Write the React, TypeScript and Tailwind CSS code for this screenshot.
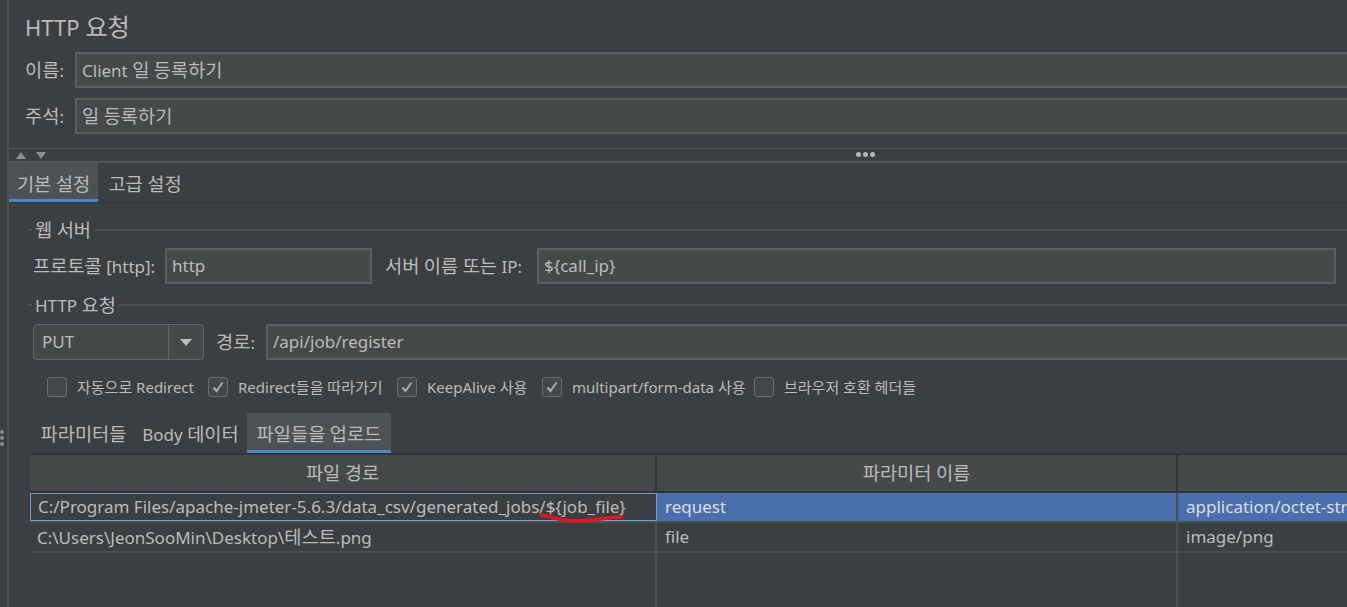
import React from 'react'

const FONT = { fontFamily: '"Noto Sans", "Noto Sans CJK KR", sans-serif' }

// 한글 구간만 조금 키워서 원본(맑은 고딕 계열) 폭에 맞춘다
function K({ t }: { t: string }) {
  const parts = t.split(/([\u3131-\u318E\uAC00-\uD7A3]+)/)
  return (
    <span className="whitespace-pre">
      {parts.map((p, i) =>
        i % 2 === 1 ? (
          <span key={i} className="text-[1.1em]">
            {p}
          </span>
        ) : (
          <React.Fragment key={i}>{p}</React.Fragment>
        ),
      )}
    </span>
  )
}

function Field({ value, className = '' }: { value: string; className?: string }) {
  return (
    <div
      className={
        'flex h-[36px] items-center border-2 border-[#5c5e5f] bg-[#45494a] px-[5px] text-[17px] leading-[24px] text-[#bbbbbb] ' +
        className
      }
    >
      <K t={value} />
    </div>
  )
}

function GroupTitle({ title }: { title: string }) {
  return (
    <div className="flex h-[24px] items-center pl-[19px]">
      <div className="h-[2px] w-[4px] bg-[#4f5254]" />
      <span className="px-[3px] text-[17px] leading-[24px] text-[#bbbbbb]">
        <K t={title} />
      </span>
      <div className="h-[2px] flex-1 bg-[#4f5254]" />
    </div>
  )
}

function Check({ checked, label, w }: { checked: boolean; label: string; w: string }) {
  return (
    <div className={'flex h-[20px] shrink-0 items-center gap-[10px] ' + w}>
      <div className="flex h-[20px] w-[20px] shrink-0 items-center justify-center rounded-[3px] border border-[#6b6e70] bg-[#43494a]">
        {checked && (
          <svg width="14" height="14" viewBox="0 0 14 14">
            <path d="M2.5 7.5 L5.5 11 L11.5 2.5" fill="none" stroke="#a9abad" strokeWidth="2" />
          </svg>
        )}
      </div>
      <span className="whitespace-nowrap text-[15px] leading-[20px] text-[#bbbbbb]">{label}</span>
    </div>
  )
}

function Tab({ label, active, w }: { label: string; active?: boolean; w: string }) {
  return (
    <div className={'flex h-full shrink-0 flex-col ' + w + (active ? ' bg-[#4e5254]' : '')}>
      <div className="flex flex-1 items-center justify-center pt-[6px] text-[17px] text-[#bbbbbb]">
        <K t={label} />
      </div>
      <div className={'h-[3px] ' + (active ? 'bg-[#4a88c7]' : '')} />
    </div>
  )
}

const rows = [
  {
    path: 'C:/Program Files/apache-jmeter-5.6.3/data_csv/generated_jobs/',
    mark: '${job_file}',
    param: 'request',
    mime: 'application/octet-stream',
    selected: true,
  },
  {
    path: 'C:\\Users\\JeonSooMin\\Desktop\\테스트.png',
    mark: '',
    param: 'file',
    mime: 'image/png',
    selected: false,
  },
]

export default function App() {
  return (
    <div className="flex h-[607px] w-[1347px] overflow-hidden bg-[#3c3f41] text-[#bbbbbb]" style={FONT}>
      {/* 왼쪽 스플리터 */}
      <div className="relative w-[7px] shrink-0">
        <div className="absolute left-[0px] top-[430px] flex flex-col gap-[2px]">
          <div className="h-[4px] w-[4px] rounded-full bg-[#8a8d8f]" />
          <div className="h-[4px] w-[4px] rounded-full bg-[#8a8d8f]" />
          <div className="h-[4px] w-[4px] rounded-full bg-[#8a8d8f]" />
        </div>
      </div>
      <div className="flex w-[1710px] shrink-0 flex-col border-l-2 border-[#4b4e50]">
        {/* 제목 / 이름 / 주석 */}
        <div className="mt-[12px] h-[30px] pl-[16px] text-[22px] leading-[30px] text-[#bbbbbb]">
          <K t="HTTP 요청" />
        </div>
        <div className="mt-[10px] flex items-center pl-[16px]">
          <span className="w-[50px] text-[17px]">
            <K t="이름:" />
          </span>
          <Field value="Client 일 등록하기" className="flex-1" />
        </div>
        <div className="mt-[10px] flex items-center pl-[16px]">
          <span className="w-[50px] text-[17px]">
            <K t="주석:" />
          </span>
          <Field value="일 등록하기" className="flex-1" />
        </div>

        {/* 분할 막대 */}
        <div className="mt-[14px] h-[1px] bg-[#545759]" />
        <div className="relative flex h-[12px] items-center gap-[10px] pl-[7px]">
          <svg width="10" height="7" viewBox="0 0 10 7">
            <path d="M0 7 L5 0 L10 7 Z" fill="#8c8f91" />
          </svg>
          <svg width="10" height="7" viewBox="0 0 10 7">
            <path d="M0 0 L5 7 L10 0 Z" fill="#8c8f91" />
          </svg>
          <div className="absolute left-[847px] top-[3px] flex gap-[2px]">
            <div className="h-[5px] w-[5px] rounded-full bg-[#b4b6b8]" />
            <div className="h-[5px] w-[5px] rounded-full bg-[#b4b6b8]" />
            <div className="h-[5px] w-[5px] rounded-full bg-[#b4b6b8]" />
          </div>
        </div>
        <div className="h-[2px] bg-[#545759]" />

        {/* 상단 탭 */}
        <div className="flex h-[40px] items-stretch gap-[2px] border-b border-[#333537]">
          <Tab label="기본 설정" active w="w-[89px]" />
          <Tab label="고급 설정" w="w-[90px]" />
        </div>

        {/* 웹 서버 */}
        <div className="mt-[15px]">
          <GroupTitle title="웹 서버" />
        </div>
        <div className="mt-[6px] flex items-center pl-[24px]">
          <span className="w-[132px] text-[17px]">
            <K t="프로토콜 [http]:" />
          </span>
          <Field value="http" className="w-[207px]" />
          <span className="ml-[13px] w-[152px] text-[17px]">
            <K t="서버 이름 또는 IP:" />
          </span>
          <Field value="${call_ip}" className="w-[799px]" />
          <span className="ml-[11px] text-[17px]">
            <K t="포트 번호:" />
          </span>
        </div>

        {/* HTTP 요청 */}
        <div className="mt-[9px]">
          <GroupTitle title="HTTP 요청" />
        </div>
        <div className="mt-[7px] flex items-center pl-[24px]">
          <div className="flex h-[36px] w-[171px] items-stretch rounded-[4px] border border-[#646769] bg-[#45494a]">
            <div className="flex flex-1 items-center pl-[8px] text-[17px]">PUT</div>
            <div className="flex w-[35px] items-center justify-center border-l border-[#646769]">
              <svg width="12" height="7" viewBox="0 0 12 7">
                <path d="M0 0 L12 0 L6 7 Z" fill="#bbbbbb" />
              </svg>
            </div>
          </div>
          <span className="ml-[12px] w-[50px] text-[17px]">
            <K t="경로:" />
          </span>
          <Field value="/api/job/register" className="flex-1" />
        </div>
        <div className="mt-[17px] flex items-center pl-[38px]">
          <Check checked={false} label="자동으로 Redirect" w="w-[161px]" />
          <Check checked label="Redirect들을 따라가기" w="w-[189px]" />
          <Check checked label="KeepAlive 사용" w="w-[145px]" />
          <Check checked label="multipart/form-data 사용" w="w-[212px]" />
          <Check checked={false} label="브라우저 호환 헤더들" w="w-[200px]" />
        </div>

        {/* 하단 탭 */}
        <div className="mt-[16px] flex h-[40px] items-stretch pl-[24px]">
          <Tab label="파라미터들" w="w-[101px]" />
          <Tab label="Body 데이터" w="w-[113px]" />
          <Tab label="파일들을 업로드" active w="w-[144px]" />
        </div>

        {/* 파일 테이블 */}
        <div className="ml-[21px] flex flex-1 flex-col">
          <div className="flex h-[40px] border-t-2 border-b-2 border-[#313335] bg-[#45494a] text-[17px]">
            <div className="flex w-[627px] items-center justify-center border-r-2 border-[#313335]">
              <K t="파일 경로" />
            </div>
            <div className="flex w-[521px] items-center justify-center border-r-2 border-[#313335]">
              <K t="파라미터 이름" />
            </div>
            <div className="flex flex-1 items-center justify-center">
              <K t="MIME 타입" />
            </div>
          </div>
          {rows.map((r) => (
            <div key={r.path} className="flex h-[30px] border-b-2 border-[#4c4f51] text-[17px]">
              <div
                className={
                  'flex w-[627px] items-center whitespace-nowrap px-[7px] ' +
                  (r.selected ? 'border border-[#6aa2d8]' : 'border-r-2 border-[#4c4f51]')
                }
              >
                <span>
                  <K t={r.path} />
                  {r.mark && (
                    <span className="relative">
                      {r.mark}
                      <svg
                        className="absolute left-[-8px] top-[17px]"
                        width="88"
                        height="12"
                        viewBox="0 0 88 12"
                      >
                        <path
                          d="M3 3 C 14 5, 24 9.5, 38 9 C 54 8.5, 68 5.5, 84 5"
                          fill="none"
                          stroke="#e3161d"
                          strokeWidth="3.5"
                          strokeLinecap="round"
                        />
                      </svg>
                    </span>
                  )}
                </span>
              </div>
              <div
                className={
                  'flex w-[521px] items-center border-r-2 border-[#4c4f51] px-[8px] ' +
                  (r.selected ? 'bg-[#4b6eaf] text-[#dddddd]' : '')
                }
              >
                {r.param}
              </div>
              <div
                className={
                  'flex flex-1 items-center whitespace-nowrap px-[8px] ' +
                  (r.selected ? 'bg-[#4b6eaf] text-[#dddddd]' : '')
                }
              >
                {r.mime}
              </div>
            </div>
          ))}
          <div className="flex flex-1">
            <div className="w-[627px] border-r-2 border-[#4c4f51]" />
            <div className="w-[521px] border-r-2 border-[#4c4f51]" />
            <div className="flex-1" />
          </div>
        </div>
      </div>
    </div>
  )
}
